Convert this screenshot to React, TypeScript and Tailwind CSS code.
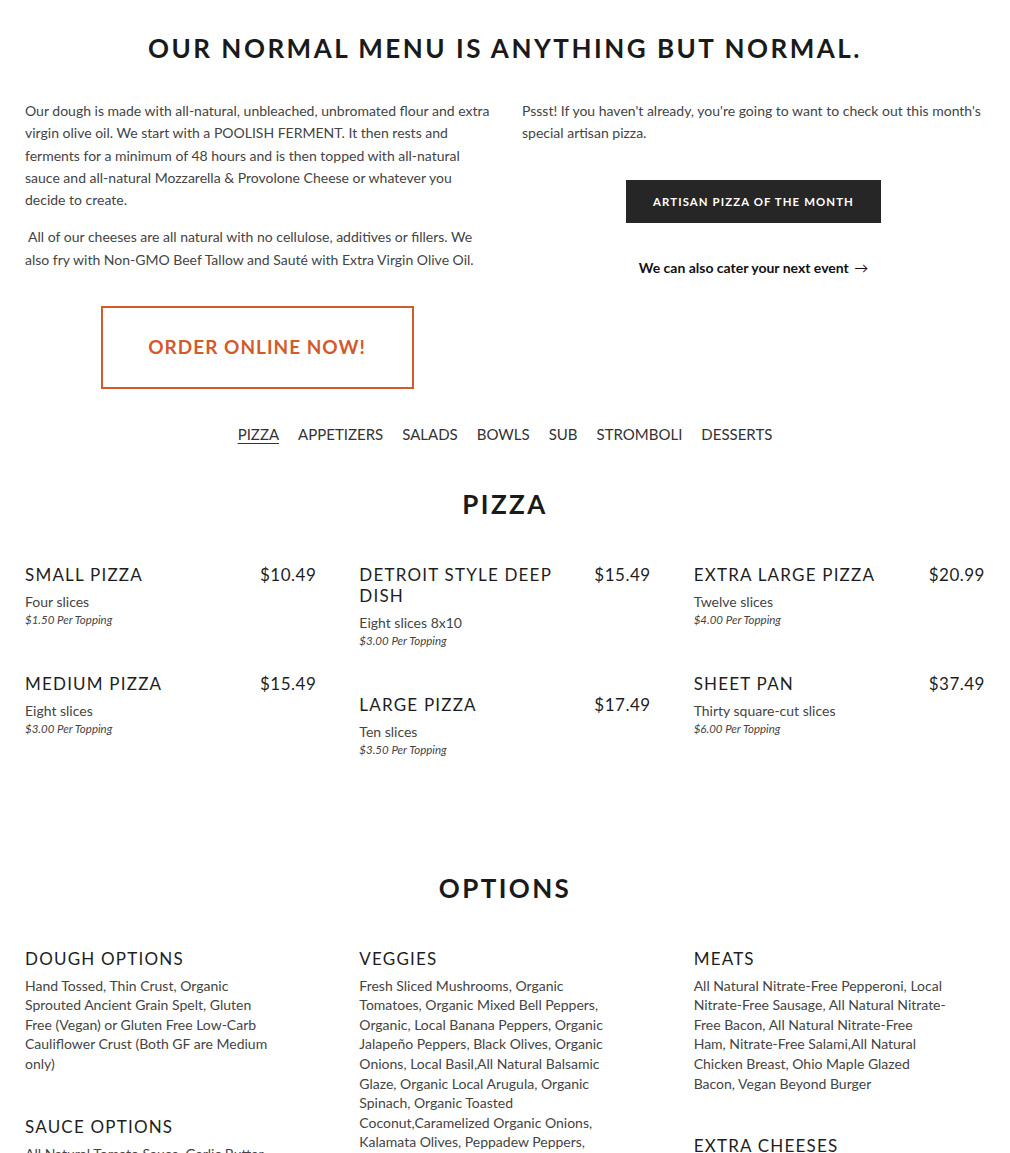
import React from "react";

const font = { fontFamily: "Lato, 'Liberation Sans', sans-serif" };

type Item = { name: string; price: string; desc: string; topping: string };

const col1: Item[] = [
  { name: "SMALL PIZZA", price: "$10.49", desc: "Four slices", topping: "$1.50" },
  { name: "MEDIUM PIZZA", price: "$15.49", desc: "Eight slices", topping: "$3.00" },
];
const col2: Item[] = [
  { name: "DETROIT STYLE DEEP DISH", price: "$15.49", desc: "Eight slices 8x10", topping: "$3.00" },
  { name: "LARGE PIZZA", price: "$17.49", desc: "Ten slices", topping: "$3.50" },
];
const col3: Item[] = [
  { name: "EXTRA LARGE PIZZA", price: "$20.99", desc: "Twelve slices", topping: "$4.00" },
  { name: "SHEET PAN", price: "$37.49", desc: "Thirty square-cut slices", topping: "$6.00" },
];

function Lines({ lines }: { lines: string[] }) {
  return (
    <>
      {lines.map((l, i) => (
        <span key={i} className="block whitespace-nowrap">
          {l}
        </span>
      ))}
    </>
  );
}

function MenuItem({ item }: { item: Item }) {
  return (
    <div className="mb-[44px]">
      <div className="flex justify-between items-start gap-4">
        <h3 className="text-[17px] leading-[21px] tracking-[1.2px] text-[#1e1e1e] max-w-[200px]">
          {item.name}
        </h3>
        <span className="text-[17px] leading-[21px] tracking-[0.5px] text-[#1e1e1e] whitespace-nowrap">
          {item.price}
        </span>
      </div>
      <p className="mt-[8px] text-[14px] leading-[18px] text-[#444]">{item.desc}</p>
      <p className="text-[11.5px] leading-[18px] italic text-[#444]">
        {item.topping} Per Topping
      </p>
    </div>
  );
}

function Option({ title, lines }: { title: string; lines: string[] }) {
  return (
    <div className="mb-[42px]">
      <h3 className="text-[17px] leading-[21px] tracking-[1.2px] text-[#1e1e1e]">{title}</h3>
      <p className="mt-[7px] text-[14px] leading-[19.6px] text-[#444]">
        <Lines lines={lines} />
      </p>
    </div>
  );
}

export default function App() {
  return (
    <div className="bg-white w-[1010px] h-[1153px] overflow-hidden" style={font}>
      <div className="px-[25px] pt-[30px]">
        <h1 className="text-center text-[26px] leading-[36px] font-bold tracking-[2.5px] text-[#1a1a1a]">
          OUR NORMAL MENU IS ANYTHING BUT NORMAL.
        </h1>

        <div className="grid grid-cols-2 gap-[32px] mt-[34px]">
          <div>
            <p className="text-[14px] leading-[22.3px] text-[#444]">
              <Lines
                lines={[
                  "Our dough is made with all-natural, unbleached, unbromated flour and extra",
                  "virgin olive oil. We start with a POOLISH FERMENT. It then rests and",
                  "ferments for a minimum of 48 hours and is then topped with all-natural",
                  "sauce and all-natural Mozzarella & Provolone Cheese or whatever you",
                  "decide to create.",
                ]}
              />
            </p>
            <p className="mt-[15px] text-[14px] leading-[22.3px] text-[#444]">
              <Lines
                lines={[
                  "\u00a0All of our cheeses are all natural with no cellulose, additives or fillers. We",
                  "also fry with Non-GMO Beef Tallow and Sauté with Extra Virgin Olive Oil.",
                ]}
              />
            </p>
            <div className="flex justify-center mt-[35px]">
              <a className="w-[313px] h-[83px] border-2 border-[#d35a2b] flex items-center justify-center text-[#d35a2b] text-[19px] font-bold tracking-[1px]">
                ORDER ONLINE NOW!
              </a>
            </div>
          </div>
          <div className="pl-[1px]">
            <p className="text-[14px] leading-[22.3px] text-[#444]">
              <Lines
                lines={[
                  "Pssst! If you haven't already, you're going to want to check out this month's",
                  "special artisan pizza.",
                ]}
              />
            </p>
            <div className="flex justify-center mt-[35px]">
              <a className="w-[255px] h-[43px] bg-[#262626] text-white flex items-center justify-center text-[11.4px] font-bold tracking-[1.1px]">
                ARTISAN PIZZA OF THE MONTH
              </a>
            </div>
            <p className="text-center mt-[34px] text-[14px] font-bold text-[#111]">
              We can also cater your next event <span className="ml-[2px] font-normal">→</span>
            </p>
          </div>
        </div>

        <nav className="flex justify-center gap-[19px] mt-[34px] text-[15px] text-[#333]">
          <span className="underline underline-offset-[3px]">PIZZA</span>
          <span>APPETIZERS</span>
          <span>SALADS</span>
          <span>BOWLS</span>
          <span>SUB</span>
          <span>STROMBOLI</span>
          <span>DESSERTS</span>
        </nav>

        <h2 className="text-center mt-[40px] text-[26px] leading-[36px] font-bold tracking-[2.4px] text-[#1a1a1a]">
          PIZZA
        </h2>

        <div className="grid grid-cols-3 gap-[43px] mt-[42px]">
          <div>{col1.map((i) => <MenuItem key={i.name} item={i} />)}</div>
          <div>{col2.map((i) => <MenuItem key={i.name} item={i} />)}</div>
          <div>{col3.map((i) => <MenuItem key={i.name} item={i} />)}</div>
        </div>

        <h2 className="text-center mt-[67px] text-[26px] leading-[36px] font-bold tracking-[2.4px] text-[#1a1a1a]">
          OPTIONS
        </h2>

        <div className="grid grid-cols-3 gap-[43px] mt-[42px]">
          <div>
            <Option
              title="DOUGH OPTIONS"
              lines={[
                "Hand Tossed, Thin Crust, Organic",
                "Sprouted Ancient Grain Spelt, Gluten",
                "Free (Vegan) or Gluten Free Low-Carb",
                "Cauliflower Crust (Both GF are Medium",
                "only)",
              ]}
            />
            <Option
              title="SAUCE OPTIONS"
              lines={["All Natural Tomato Sauce, Garlic Butter,", "Organic Pesto, Alfredo Sauce, BBQ Sauce"]}
            />
          </div>
          <div>
            <Option
              title="VEGGIES"
              lines={[
                "Fresh Sliced Mushrooms, Organic",
                "Tomatoes, Organic Mixed Bell Peppers,",
                "Organic, Local Banana Peppers, Organic",
                "Jalapeño Peppers, Black Olives, Organic",
                "Onions, Local Basil,All Natural Balsamic",
                "Glaze, Organic Local Arugula, Organic",
                "Spinach, Organic Toasted",
                "Coconut,Caramelized Organic Onions,",
                "Kalamata Olives, Peppadew Peppers,",
                "Pineapple",
              ]}
            />
          </div>
          <div>
            <Option
              title="MEATS"
              lines={[
                "All Natural Nitrate-Free Pepperoni, Local",
                "Nitrate-Free Sausage, All Natural Nitrate-",
                "Free Bacon, All Natural Nitrate-Free",
                "Ham, Nitrate-Free Salami,All Natural",
                "Chicken Breast, Ohio Maple Glazed",
                "Bacon, Vegan Beyond Burger",
              ]}
            />
            <Option title="EXTRA CHEESES" lines={["Mozzarella, Provolone, Parmesan, Feta"]} />
          </div>
        </div>
      </div>
    </div>
  );
}
